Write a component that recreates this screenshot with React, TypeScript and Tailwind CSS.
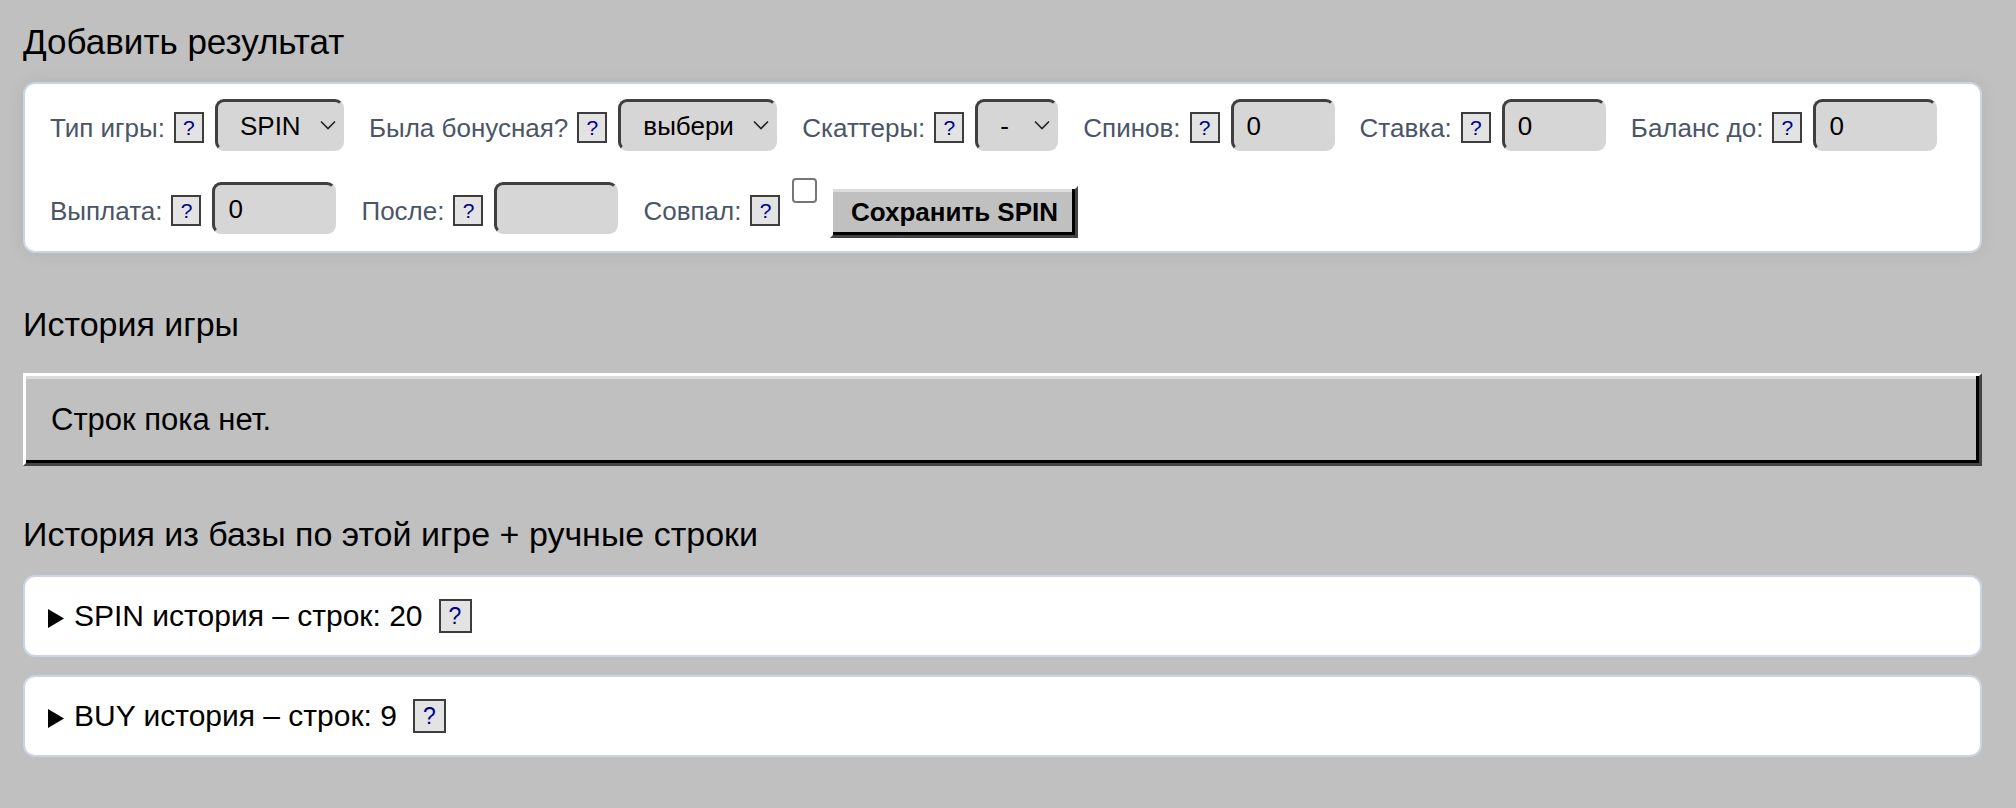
import React from "react";

const font = { fontFamily: '"Liberation Sans", Arial, sans-serif' };

// inset-looking control shell (dark top/left, flat bottom/right)
const shell =
  "h-[52px] flex items-center rounded-[9px] border-[3px] border-t-[#3f3f3f] border-l-[#3f3f3f] border-r-[#d6d6d6] border-b-[#d6d6d6] bg-[#d6d6d6] text-[26px] text-black pt-[3px]";

// raised win95-ish bevel
const raised =
  "border-[3px] border-t-white border-l-white border-r-[#444] border-b-[#444] shadow-[inset_-3px_-3px_0_#000,inset_0_3px_0_#dcdcdc]";

function Help({ big }: { big?: boolean }) {
  return (
    <span
      className={
        big
          ? "inline-flex items-center justify-center w-[33px] h-[34px] border-2 border-[#3d3d3d] bg-[#e3e3e3] text-[#00008b] text-[23px] leading-none"
          : "inline-flex items-center justify-center w-[30px] h-[31px] mt-[5px] border-2 border-[#3d3d3d] bg-[#e3e3e3] text-[#00008b] text-[21px] leading-none"
      }
    >
      ?
    </span>
  );
}

function Label({ text }: { text: string }) {
  return (
    <span className="text-[26px] leading-[30px] mt-[5px] text-[#4a5568] whitespace-nowrap">
      {text}
    </span>
  );
}

function Chevron() {
  return (
    <svg width="16" height="10" viewBox="0 0 16 10" fill="none" className="-mt-[3px]">
      <polyline
        points="1,1.5 8,8.5 15,1.5"
        stroke="#222"
        strokeWidth="1.6"
        fill="none"
      />
    </svg>
  );
}

function SelectBox({ value, width }: { value: string; width: string }) {
  return (
    <div className={`${shell} ${width} justify-between pl-[22px] pr-[5px]`}>
      <span>{value}</span>
      <Chevron />
    </div>
  );
}

function InputBox({ value, width }: { value: string; width: string }) {
  return (
    <div className={`${shell} ${width} pl-[13px]`}>
      <span>{value}</span>
    </div>
  );
}

function Field({ label, children }: { label: string; children: React.ReactNode }) {
  return (
    <div className="flex items-center">
      <Label text={label} />
      <span className="ml-[9px] flex">
        <Help />
      </span>
      <div className="ml-[11px]">{children}</div>
    </div>
  );
}

function Triangle() {
  return (
    <svg width="16" height="19" viewBox="0 0 16 19" className="mt-[4px]">
      <polygon points="0,0 16,9.5 0,19" fill="#000" />
    </svg>
  );
}

function HistoryCard({ title }: { title: string }) {
  return (
    <div className="bg-white border-2 border-[#cbd5e1] rounded-[12px] pl-[23px] py-[22px] flex items-center">
      <Triangle />
      <span className="ml-[10px] text-[30px] leading-[34px] text-black">{title}</span>
      <span className="ml-[16px] flex">
        <Help big />
      </span>
    </div>
  );
}

export default function App() {
  return (
    <div
      className="min-h-screen bg-[#c0c0c0] pl-[23px] pr-[34px] pt-[22px] pb-[40px]"
      style={font}
    >
      <h2 className="text-[35px] leading-[39px] text-black font-normal">Добавить результат</h2>

      {/* add form */}
      <div className="mt-[21px] bg-white border-2 border-[#cbd5e1] rounded-[12px] shadow-[0_0_18px_rgba(0,0,0,0.07)] pl-[25px] pt-[15px] pb-[13px]">
        <div className="flex items-center gap-x-[25px]">
          <Field label="Тип игры:">
            <SelectBox value="SPIN" width="w-[129px]" />
          </Field>
          <Field label="Была бонусная?">
            <SelectBox value="выбери" width="w-[159px]" />
          </Field>
          <Field label="Скаттеры:">
            <SelectBox value="-" width="w-[83px]" />
          </Field>
          <Field label="Спинов:">
            <InputBox value="0" width="w-[104px]" />
          </Field>
          <Field label="Ставка:">
            <InputBox value="0" width="w-[104px]" />
          </Field>
          <Field label="Баланс до:">
            <InputBox value="0" width="w-[124px]" />
          </Field>
        </div>

        <div className="mt-[27px] flex items-center gap-x-[25px]">
          <Field label="Выплата:">
            <InputBox value="0" width="w-[124px]" />
          </Field>
          <Field label="После:">
            <InputBox value="" width="w-[124px]" />
          </Field>
          <div className="flex items-center">
            <Label text="Совпал:" />
            <span className="ml-[9px] flex">
              <Help />
            </span>
            <span className="self-start ml-[12px] w-[25px] h-[25px] rounded-[4px] border-2 border-[#767676] bg-white" />
            <button
              className={`ml-[13px] mt-[8px] w-[248px] h-[52px] bg-[#c0c0c0] ${raised} flex items-center justify-center text-[26px] font-bold text-black`}
            >
              Сохранить SPIN
            </button>
          </div>
        </div>
      </div>

      <h2 className="mt-[52px] text-[34px] leading-[39px] text-black font-normal">История игры</h2>

      <div className={`mt-[29px] bg-[#c0c0c0] ${raised} pl-[25px] pt-[27px] pb-[26px]`}>
        <span className="block text-[31px] leading-[34px] text-black">Строк пока нет.</span>
      </div>

      <h2 className="mt-[49px] text-[34px] leading-[39px] text-black font-normal">
        История из базы по этой игре + ручные строки
      </h2>

      <div className="mt-[21px]">
        <HistoryCard title="SPIN история – строк: 20" />
      </div>
      <div className="mt-[18px]">
        <HistoryCard title="BUY история – строк: 9" />
      </div>
    </div>
  );
}
